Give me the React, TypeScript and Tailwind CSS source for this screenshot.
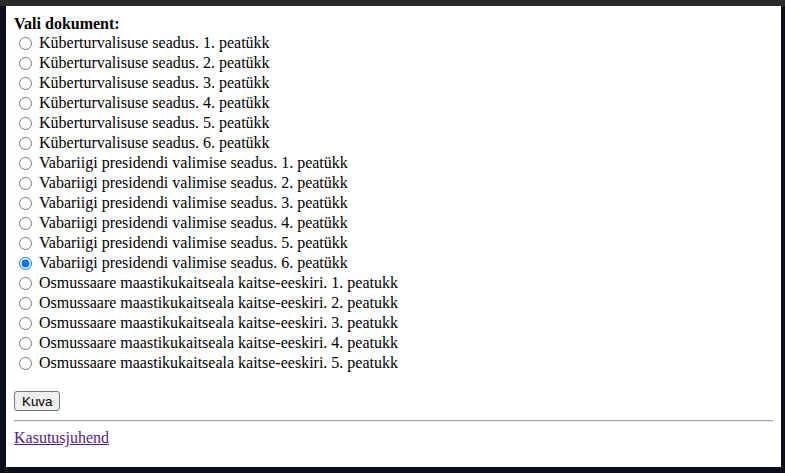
import React from "react";

const groups: { name: string; suffix: string; count: number }[] = [
  { name: "Küberturvalisuse seadus.", suffix: "peatükk", count: 6 },
  { name: "Vabariigi presidendi valimise seadus.", suffix: "peatükk", count: 6 },
  { name: "Osmussaare maastikukaitseala kaitse-eeskiri.", suffix: "peatukk", count: 5 },
];

export default function App() {
  const items: string[] = [];
  groups.forEach((g) => {
    for (let i = 1; i <= g.count; i++) items.push(`${g.name} ${i}. ${g.suffix}`);
  });
  const selected = "Vabariigi presidendi valimise seadus. 6. peatükk";
  return (
    <div className="w-[785px] h-[473px] bg-[#0b0f19] overflow-hidden flex flex-col">
      <div className="h-[6px] w-full bg-[#2b2b2b]" />
      <div
        className="ml-[6px] w-[775px] h-[461px] bg-white px-[8px] pt-[8px] text-black text-[16px]"
        style={{ fontFamily: '"Liberation Serif", "Times New Roman", serif' }}
      >
        <div className="h-[19px] leading-[19px] font-bold">Vali dokument:</div>
        {items.map((t) => (
          <label key={t} className="flex items-center h-[20px] leading-[20px]">
            <input
              type="radio"
              name="doc"
              defaultChecked={t === selected}
              className="ml-[5px] mr-[3px] w-[13px] h-[13px] mt-[1px]"
            />
            <span className="pl-[4px]">{t}</span>
          </label>
        ))}
        <div className="mt-[18px] h-[20px] flex">
          <button
            className="border border-[#767676] rounded-[3px] bg-[#efefef] px-[7px] h-[20px] text-[13.33px] leading-[15px] text-black"
            style={{ fontFamily: '"Liberation Sans", Arial, sans-serif' }}
          >
            Kuva
          </button>
        </div>
        <hr className="mt-[9px] border-0 border-t border-b border-t-[#a0a0a0] border-b-[#eeeeee] h-0" />
        <div className="mt-[6px] h-[19px] leading-[19px]">
          <a href="#" className="text-[#551a8b] underline">
            Kasutusjuhend
          </a>
        </div>
      </div>
    </div>
  );
}
